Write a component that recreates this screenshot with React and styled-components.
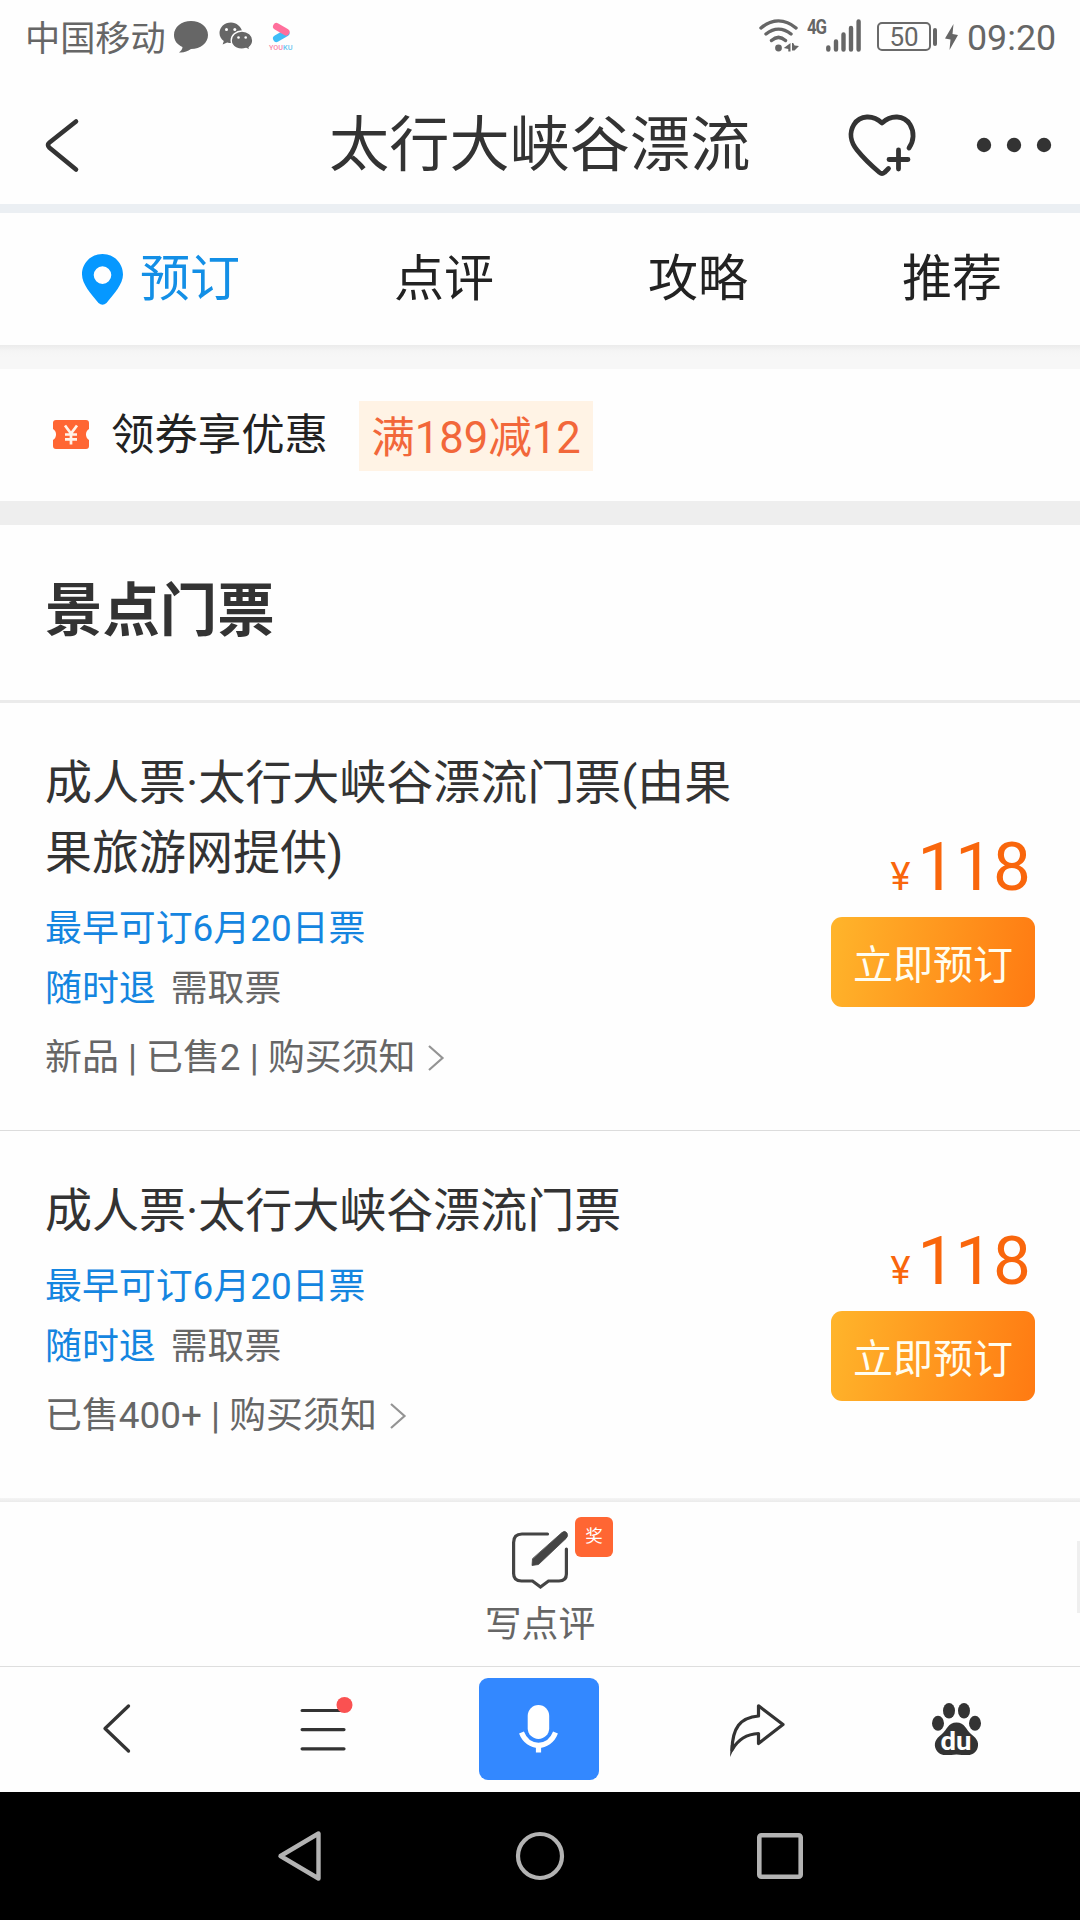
import React from "react";
import styled, { createGlobalStyle } from "styled-components";

const GlobalStyle = createGlobalStyle`
  * { box-sizing: border-box; }
  html, body { margin: 0; padding: 0; background: #fefefe; }
  body { font-family: Roboto, "Noto Sans CJK SC", sans-serif; color: #333; overflow: hidden; }
`;

const Screen = styled.main`
  width: 1080px;
  height: 1920px;
  display: flex;
  flex-direction: column;
  background: #fefefe;
  white-space: nowrap;
`;

const Icon = styled.svg`
  display: block;
  flex: none;
  overflow: visible;
  margin-left: ${(p) => p.$ml || 0}px;
  margin-top: ${(p) => p.$mt || 0}px;
`;

/* ---------- status bar ---------- */
const StatusBar = styled.div`
  display: flex;
  height: 76px;
  padding: 0 24px 0 25px;
  color: #666;
  align-items: flex-start;
`;
const Carrier = styled.span`
  width: 149px;
  margin-top: 13px;
  font-size: 35.2px;
  line-height: 52px;
`;
const Spacer = styled.div`
  flex: 1;
`;
const Network = styled.span`
  margin: 17px 0 0 8px;
  width: 20px;
  font: 700 20px/20px Roboto, sans-serif;
  letter-spacing: -1.5px;
  transform: scaleX(0.84);
  transform-origin: left;
`;
const Battery = styled.span`
  width: 54px;
  height: 29px;
  margin: 22px 0 0 16px;
  border: 2px solid #6a6a6a;
  border-radius: 5px;
  font-size: 26px;
  line-height: 27px;
  text-align: center;
`;
const BatteryCap = styled.span`
  width: 4px;
  height: 18px;
  margin: 28px 0 0 2px;
  border-radius: 2px;
  background: #666;
`;
const Clock = styled.span`
  margin: 12px 0 0 9px;
  width: 89px;
  font-size: 35.8px;
  line-height: 52px;
`;

/* ---------- header ---------- */
const Header = styled.header`
  display: flex;
  align-items: flex-start;
  height: 128px;
  padding: 0 29px 0 45px;
`;
const Title = styled.h1`
  margin: 28px 0 0 251px;
  width: 422px;
  font-size: 60.2px;
  line-height: 84px;
  font-weight: 400;
`;
const Band = styled.div`
  flex: none;
  height: ${(p) => p.$h}px;
  background: ${(p) => p.$color};
`;

/* ---------- tabs ---------- */
const Tabs = styled.nav`
  display: flex;
  height: 132px;
  padding-left: 63px;
  background: #fefefe;
`;
const Tab = styled.div`
  width: 254px;
  display: flex;
  justify-content: center;
  font-size: 50px;
  line-height: 132px;
  color: ${(p) => (p.$active ? "#138fe6" : "#222")};
  & > svg { margin-left: -58px; margin-right: 17px; }
`;
const TabShade = styled.div`
  height: 24px;
  background: linear-gradient(#ebebeb, #f5f5f5 6px, #f7f7f7 12px);
`;

/* ---------- coupon ---------- */
const Coupon = styled.section`
  display: flex;
  height: 132px;
  padding: 32px 0 0 53px;
`;
const CouponLabel = styled.span`
  margin-left: 22px;
  width: 248px;
  font-size: 43.4px;
  line-height: 70px;
  color: #222;
`;
const CouponTag = styled.span`
  width: 234px;
  height: 70px;
  background: #fff3e5;
  color: #f2673a;
  font-size: 43.6px;
  line-height: 76px;
  text-align: center;
`;

/* ---------- tickets ---------- */
const SectionTitle = styled.h2`
  margin: 0;
  height: 178px;
  padding-left: 45px;
  border-bottom: 3px solid #ebebeb;
  font-size: 57.4px;
  font-weight: 700;
  line-height: 174px;
`;
const Ticket = styled.article`
  display: flex;
  justify-content: space-between;
  height: ${(p) => p.$h}px;
  padding: 45px 45px 0 45px;
  border-bottom: ${(p) => (p.$line ? "1px solid #dcdcdc" : "0")};
`;
const Details = styled.div`
  display: flex;
  flex-direction: column;
`;
const Name = styled.h3`
  margin: 0 0 11px;
  font-size: 47px;
  line-height: 70px;
  font-weight: 400;
`;
const Info = styled.div`
  display: flex;
  gap: 15px;
  font-size: 36.9px;
  line-height: 60px;
  color: ${(p) => (p.$blue ? "#1485e0" : "#666")};
`;
const Blue = styled.span`
  color: #1485e0;
`;
const Meta = styled.div`
  display: flex;
  align-items: flex-start;
  margin-top: 9px;
  font-size: 36.9px;
  line-height: 60px;
  color: #666;
`;
const Buy = styled.div`
  display: flex;
  flex-direction: column;
  align-items: flex-end;
  margin-top: ${(p) => p.$mt}px;
`;
const Price = styled.div`
  display: flex;
  align-items: baseline;
  padding-right: 4px;
  gap: 7px;
  color: #f9660c;
  font-size: 67.4px;
  line-height: 80px;
`;
const Yen = styled.span`
  font-size: 38px;
`;
const BookButton = styled.button`
  width: 204px;
  height: 90px;
  margin: 0;
  padding: 8px 0 0;
  border: 0;
  border-radius: 11px;
  background: linear-gradient(100deg, #ffb52b, #ff7a12);
  color: #fffdf0;
  font: 400 40px/80px Roboto, "Noto Sans CJK SC", sans-serif;
`;

/* ---------- write review ---------- */
const Review = styled.section`
  position: relative;
  display: flex;
  flex-direction: column;
  align-items: center;
  height: 169px;
  background: linear-gradient(#f5f5f5, #ebebeb) top / 100% 4px no-repeat;
  border-bottom: 1px solid #dedede;
  padding-top: 33px;
`;
const IconWrap = styled.div`
  position: relative;
`;
const Award = styled.span`
  position: absolute;
  left: 63px;
  top: -14px;
  width: 38px;
  height: 40px;
  border-radius: 6px;
  background: #ff6633;
  color: #fff;
  font-size: 17.5px;
  line-height: 39px;
  text-align: center;
`;
const ReviewLabel = styled.span`
  margin-top: 5px;
  font-size: 36.8px;
  line-height: 60px;
  color: #666;
`;
const EdgeHandle = styled.span`
  position: absolute;
  right: 0;
  top: 43px;
  width: 3px;
  height: 72px;
  background: #efefef;
`;

/* ---------- bottom bars ---------- */
const Toolbar = styled.nav`
  display: flex;
  align-items: flex-start;
  height: 125px;
  padding-left: 102.5px;
`;
const MicButton = styled.button`
  display: flex;
  justify-content: center;
  width: 120px;
  height: 102px;
  margin: 11px 0 0 128.5px;
  padding: 27px 1px 0 0;
  border: 0;
  border-radius: 9px;
  background: #3388ff;
`;
const SystemNav = styled.nav`
  display: flex;
  align-items: flex-start;
  height: 128px;
  padding-left: 278px;
  background: #000;
`;

function TicketRow({ name, meta, height, line, buyTop }) {
  return (
    <Ticket $h={height} $line={line}>
      <Details>
        <Name>
          {name.map((part, i) => (
            <React.Fragment key={part}>
              {i > 0 && <br />}
              {part}
            </React.Fragment>
          ))}
        </Name>
        <Info $blue>最早可订6月20日票</Info>
        <Info>
          <Blue>随时退</Blue>
          <span>需取票</span>
        </Info>
        <Meta>
          {meta}
          <Icon $ml={13} $mt={17} width="16" height="26" viewBox="0 0 16 26" fill="none" stroke="#949494" strokeWidth="2.200">
            <path d="M1 1 14.500 13 1 25" />
          </Icon>
        </Meta>
      </Details>
      <Buy $mt={buyTop}>
        <Price>
          <Yen>¥</Yen>118
        </Price>
        <BookButton>立即预订</BookButton>
      </Buy>
    </Ticket>
  );
}

export default function App() {
  return (
    <Screen>
      <GlobalStyle />
      <StatusBar>
        <Carrier>中国移动</Carrier>
        <Icon $mt={21} width="34" height="32" viewBox="0 0 34 32" fill="#666">
          <path d="M17 0C26.500 0 34 6 34 14S26.500 28 17 28C13 30.500 10 32 5 31.500 7 30 8.500 28 8.500 26 3 23.500 0 19.500 0 14 0 6 7.500 0 17 0Z" />
        </Icon>
        <Icon $ml={11} $mt={22} width="34" height="29" viewBox="0 0 34 29">
          <path fill="#666" d="M12 .5C5.500.5.5 5.200.5 11c0 3.500 1.700 6 4.300 8L3.600 22.500 8.200 20.400c4 1 8 .6 11-1.600C23 16.500 23.500 13 23.300 9.500 22 4.500 17.500.5 12 .5Z" />
          <path fill="#666" stroke="#fefefe" strokeWidth="1.400" d="M23 9c6 0 10.800 4.200 10.800 9.500 0 3-1.500 5.300-3.600 7l1 3-4-2c-7.500 2.200-15-1.500-15-8C12.200 13.200 17 9 23 9Z" />
          <g fill="#fefefe">
            <circle cx="7.500" cy="7.500" r="1.500" />
            <circle cx="15.800" cy="7.500" r="1.500" />
            <circle cx="19.500" cy="15.500" r="1.300" />
            <circle cx="26.700" cy="15.500" r="1.300" />
          </g>
        </Icon>
        <Icon $ml={16} $mt={22} width="24" height="30" viewBox="0 0 24 30" fill="none">
          <path d="M7.500 16.500 17 11" stroke="#3fbdf7" strokeWidth="7" strokeLinecap="round" />
          <path d="M7.500 4.500 17 10" stroke="#ff6f9c" strokeWidth="7" strokeLinecap="round" />
          <text x="0" y="28" fontSize="7" fontWeight="500" fontFamily="Roboto, sans-serif" textLength="14" lengthAdjust="spacingAndGlyphs" fill="#f985a8">YOU</text>
          <text x="14" y="28" fontSize="7" fontWeight="500" fontFamily="Roboto, sans-serif" textLength="9.500" lengthAdjust="spacingAndGlyphs" fill="#6ac6f0">KU</text>
        </Icon>
        <Spacer />
        <Icon $mt={19} width="40" height="33" viewBox="0 0 40 33" fill="none" stroke="#666" strokeWidth="3.400" strokeLinecap="round">
          <path d="M2 9C13-.5 26-.5 37 9M7 15c8-6.500 17-6.500 25 0M12.500 21.500c4.500-4 9.500-4 14 0" />
          <g fill="#666" stroke="none">
            <circle cx="19.500" cy="29" r="3.400" />
            <path d="M31.500 24v8.500h-2.200v-2.500L24.800 29ZM33 24h1.200L35.600 26.500 40 27 35.500 31.500H33Z" />
          </g>
        </Icon>
        <Network>4G</Network>
        <Icon $ml={-1} $mt={19} width="35" height="33" viewBox="0 0 35 33" stroke="#666" strokeWidth="4.400" strokeLinecap="round">
          <path d="M2.300 28.500v2M10 22.500v8M17.500 15.500v15M25 9v21.500M32.600 2.500v28" />
        </Icon>
        <Battery>50</Battery>
        <BatteryCap />
        <Icon $ml={8} $mt={24} width="13" height="26" viewBox="0 0 13 26" fill="#666">
          <path d="M8.500 0 0 14.500 5.500 15.500 4.500 26 13 11 7.500 10Z" />
        </Icon>
        <Clock>09:20</Clock>
      </StatusBar>

      <Header>
        <Icon $mt={43} width="33" height="53" viewBox="0 0 33 53" fill="none" stroke="#333" strokeWidth="4.600" strokeLinecap="round" strokeLinejoin="round">
          <path d="M31 2.500 4.500 23.500Q1.500 26 4.500 28.800L31 50.500" />
        </Icon>
        <Title>太行大峡谷漂流</Title>
        <Spacer />
        <Icon $mt={38} width="68" height="63" viewBox="0 0 68 63" fill="none" stroke="#333" strokeWidth="4.800" strokeLinecap="round" strokeLinejoin="round">
          <path d="M61 34C66 27 66.500 18 62 10.500 56 1 43 .5 34 9 25 .5 12 1 6 10.500 1 18.500 2.500 28 9 36 17 46 25 53 31.500 58.500Q34 60.500 36.500 58.500L40.500 54.500" />
          <path d="M41 45.500h19M50.500 36v19" />
        </Icon>
        <Icon $ml={61} $mt={62} width="74" height="14" viewBox="0 0 74 14" fill="#333">
          <circle cx="7" cy="7" r="7.200" />
          <circle cx="37" cy="7" r="7.200" />
          <circle cx="67" cy="7" r="7.200" />
        </Icon>
      </Header>
      <Band $h={9} $color="#ebeff3" />

      <Tabs>
        <Tab $active>
          <Icon $mt={41} width="41" height="51" viewBox="0 0 41 51">
            <path fill="#0698ff" fillRule="evenodd" d="M20.500 0C9 0 0 9 0 20.500 0 30 9 40 16.500 49Q20.500 52.500 24.500 49C32 40 41 30 41 20.500 41 9 32 0 20.500 0ZM20.500 12.300a8.800 8.800 0 1 1 0 17.600 8.800 8.800 0 0 1 0-17.600Z" />
          </Icon>
          预订
        </Tab>
        <Tab>点评</Tab>
        <Tab>攻略</Tab>
        <Tab>推荐</Tab>
      </Tabs>
      <TabShade />

      <Coupon>
        <Icon $mt={19} width="36" height="29" viewBox="0 0 36 29">
          <path fill="#ff6633" d="M3 0H33Q36 0 36 3V9A6.500 6.500 0 0 0 36 20V26Q36 29 33 29H3Q0 29 0 26V20A6.500 6.500 0 0 0 0 9V3Q0 0 3 0Z" />
          <path d="M12 5.500 18 13.500 24 5.500M18 13V24.500M12 14.500H24M12 19.300H24" fill="none" stroke="#fff3e8" strokeWidth="2.700" />
        </Icon>
        <CouponLabel>领券享优惠</CouponLabel>
        <CouponTag>满189减12</CouponTag>
      </Coupon>
      <Band $h={24} $color="#eeeeee" />

      <SectionTitle>景点门票</SectionTitle>
      <TicketRow
        name={["成人票·太行大峡谷漂流门票(由果", "果旅游网提供)"]}
        meta="新品 | 已售2 | 购买须知"
        height={428}
        line
        buyTop={79}
      />
      <TicketRow
        name={["成人票·太行大峡谷漂流门票"]}
        meta="已售400+ | 购买须知"
        height={367}
        buyTop={45}
      />

      <Review>
        <IconWrap>
          <Icon width="56" height="59" viewBox="0 0 56 59" fill="none" stroke="#444" strokeWidth="3.200" strokeLinecap="round">
            <path d="M35.500 3H10Q1.600 3 1.600 11.500V42.500Q1.600 50 9.500 50H20.500L28.500 56 36.500 50H47Q54.400 50 54.400 43V18" />
            <path d="M50 1.500Q53-1 55 2 56.500 5 54 7.500L26.500 33.500 20 34.500 20.500 28Z" fill="#444" stroke="#444" strokeWidth="0.800" />
          </Icon>
          <Award>奖</Award>
        </IconWrap>
        <ReviewLabel>写点评</ReviewLabel>
        <EdgeHandle />
      </Review>

      <Toolbar>
        <Icon $mt={37} width="27" height="49" viewBox="0 0 27 49" fill="none" stroke="#333" strokeWidth="3.300" strokeLinecap="round" strokeLinejoin="round">
          <path d="M25.500 2 2 24.500 25.500 47" />
        </Icon>
        <Icon $ml={170} $mt={30} width="51" height="53" viewBox="0 0 51 53" stroke="#333" strokeWidth="3.200" strokeLinecap="round">
          <path d="M2.100 13.500H44M2.100 32.600H44M2.100 51.800H44" />
          <circle cx="44.500" cy="8" r="8" fill="#fa5151" stroke="none" />
        </Icon>
        <MicButton>
          <Icon width="39" height="48" viewBox="0 0 39 48">
            <rect x="8.700" y="0" width="21.500" height="34" rx="10.700" fill="#fff" />
            <path d="M2.500 27.500C9 44.500 30 44.500 36.500 27.500M19.500 40V47.500" fill="none" stroke="#fff" strokeWidth="5.200" />
          </Icon>
        </MicButton>
        <Icon $ml={131} $mt={37} width="55" height="53" viewBox="0 0 55 53" fill="none" stroke="#333" strokeWidth="3.200" strokeLinejoin="round">
          <path d="M28.500 1.800 53 20.500 28.500 39.500V29.500C17 30 8.500 34.500 2 46 2.500 24 10 13.500 28.500 12Z" />
          <path d="M0 53 .8 41 5 42.500Z" fill="#333" stroke="none" />
        </Icon>
        <Icon $ml={147} $mt={36} width="49" height="53" viewBox="0 0 49 53" fill="#333">
          <ellipse cx="17" cy="7.800" rx="6" ry="7.800" />
          <ellipse cx="32" cy="7.800" rx="6" ry="7.800" />
          <ellipse cx="6" cy="20.200" rx="6" ry="7.500" />
          <ellipse cx="43" cy="20.200" rx="6" ry="7.500" />
          <path d="M24.500 19.500C33 19.500 34 27 39 31 46 36 47.500 41 45 46.500 41 54 34 52 24.500 51.500 15 52 8 54 4 46.500 1.500 41 3 36 10 31 15 27 16 19.500 24.500 19.500Z" />
          <text x="8.500" y="47.300" fontSize="26" fontWeight="700" fontFamily="Roboto, sans-serif" textLength="31" lengthAdjust="spacingAndGlyphs" fill="#fefefe">du</text>
        </Icon>
      </Toolbar>

      <SystemNav>
        <Icon $mt={39} width="43" height="50" viewBox="0 0 43 50" fill="none" stroke="#b3b3b3" strokeWidth="4.400" strokeLinejoin="round">
          <path d="M40.500 2.500V47.500L2.500 25Z" />
        </Icon>
        <Icon $ml={195} $mt={40} width="48" height="48" viewBox="0 0 48 48" fill="none" stroke="#b3b3b3" strokeWidth="4.200">
          <circle cx="24" cy="24" r="22" />
        </Icon>
        <Icon $ml={193} $mt={41} width="46" height="46" viewBox="0 0 46 46" fill="none" stroke="#b3b3b3" strokeWidth="4.600">
          <rect x="2.300" y="2.300" width="41.400" height="41.400" rx="2" />
        </Icon>
      </SystemNav>
    </Screen>
  );
}
